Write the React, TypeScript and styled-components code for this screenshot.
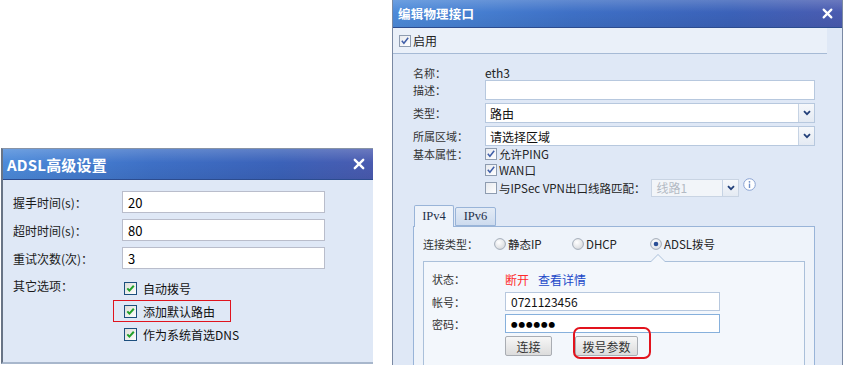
import React from "react";
import styled, { createGlobalStyle } from "styled-components";

const GlobalStyle = createGlobalStyle`
  html, body { margin: 0; padding: 0; background: #fff; }
  body { font-family: "Noto Sans CJK SC", "DejaVu Sans", sans-serif; }
`;

const Page = styled.div`
  display: flex;
  align-items: flex-start;
  width: 844px;
  height: 365px;
  overflow: hidden;
  background: #fff;
`;

/* ---------- shared bits ---------- */

const TitleBar = styled.div<{ $h: number; $pad: number }>`
  height: ${(p) => p.$h}px;
  flex: none;
  display: flex;
  align-items: center;
  justify-content: space-between;
  padding: 0 ${(p) => p.$pad + 4}px 0 ${(p) => p.$pad}px;
  background:
    linear-gradient(180deg, rgba(255,255,255,0.18) 0%, rgba(255,255,255,0) 45%, rgba(0,0,0,0.06) 100%),
    linear-gradient(90deg, #4d8bda 0%, #3e70c6 40%, #3b62b9 75%, #4a5bb0 100%);
  border-bottom: 1px solid #2c4c8f;
  color: #fff;
`;

const TitleText = styled.span<{ $size: number }>`
  font-size: ${(p) => p.$size}px;
  font-weight: bold;
  letter-spacing: 0.2px;
`;

const Close = ({ size }: { size: number }) => (
  <svg width={size} height={size} viewBox="0 0 10 10">
    <path d="M1.5 1.5 L8.5 8.5 M8.5 1.5 L1.5 8.5" stroke="#fff" strokeWidth="2" strokeLinecap="round" />
  </svg>
);

/* ---------- ADSL dialog ---------- */

const AdslDialog = styled.section`
  margin: 148px 0 0 1px;
  width: 372px;
  height: 216px;
  box-sizing: border-box;
  flex: none;
  display: flex;
  flex-direction: column;
  background: #dfe8f6;
  border-left: 2px solid #687486;
  border-top: 1px solid #8793a6;
  border-bottom: 2px solid #a8b7cc;
`;

const AdslBody = styled.div`
  padding: 11px 0 0 10px;
  display: grid;
  grid-template-columns: 109px 203px;
  row-gap: 6px;
  align-items: center;
  font-size: 12px;
  color: #1a1a1a;
`;

const AdslLabel = styled.span`
  white-space: nowrap;
`;

const AdslInput = styled.div`
  height: 22px;
  box-sizing: border-box;
  background: #fff;
  border: 1px solid #b9bdcb;
  padding-left: 5px;
  display: flex;
  align-items: center;
  font-size: 13px;
  color: #000;
`;

const OptionLabel = styled.span`
  align-self: start;
  margin-top: 2px;
  line-height: 17px;
`;

const OptionList = styled.div`
  align-self: start;
  margin-top: 2px;
  display: flex;
  flex-direction: column;
`;

const OptionRow = styled.div`
  position: relative;
  height: 23px;
  display: flex;
  align-items: center;
  gap: 6px;
  padding-left: 2px;
  font-size: 12px;
  color: #111;
`;

const Mark = styled.span`
  position: absolute;
  left: -9px;
  top: 0;
  width: 118px;
  height: 22px;
  box-sizing: border-box;
  border: 1px solid #e0141e;
`;

const XpCheck = () => (
  <svg width="13" height="13" viewBox="0 0 13 13">
    <defs>
      <linearGradient id="xpg" x1="0" y1="0" x2="1" y2="1">
        <stop offset="0" stopColor="#dcdcd6" />
        <stop offset="1" stopColor="#ffffff" />
      </linearGradient>
    </defs>
    <rect x="0.5" y="0.5" width="12" height="12" fill="url(#xpg)" stroke="#1c4f7e" />
    <path d="M3.3 6.3 L5.4 8.6 L9.8 3.8" fill="none" stroke="#21a12a" strokeWidth="2" />
  </svg>
);

/* ---------- interface dialog ---------- */

const IfaceDialog = styled.section`
  margin-left: 19px;
  width: 451px;
  height: 365px;
  flex: none;
  box-sizing: border-box;
  display: flex;
  flex-direction: column;
  background: #dfe8f6;
  border-left: 1px solid #7a89a3;
  border-right: 1px solid #7a89a3;
  font-size: 11px;
  color: #333;
`;

const EnableBar = styled.div`
  height: 25px;
  margin-right: 15px;
  flex: none;
  display: flex;
  align-items: center;
  gap: 2px;
  padding-left: 6px;
  background: #eaf0f9;
  border-bottom: 1px solid #a6bad5;
  font-size: 12px;
  color: #222;
`;

const Form = styled.div`
  display: flex;
  flex-direction: column;
  padding: 10px 0 0 20px;
`;

const Field = styled.div<{ $h: number; $mt?: number; $lw?: number }>`
  display: grid;
  grid-template-columns: ${(p) => p.$lw ?? 72}px 1fr;
  align-items: center;
  height: ${(p) => p.$h}px;
  margin-top: ${(p) => p.$mt ?? 0}px;
`;

const Label = styled.span`
  white-space: nowrap;
  color: #333;
`;

const TextBox = styled.div<{ $w: number; $h?: number; $focus?: boolean }>`
  width: ${(p) => p.$w}px;
  height: ${(p) => p.$h ?? 20}px;
  box-sizing: border-box;
  background: #fff;
  border: 1px solid ${(p) => (p.$focus ? "#86b0dc" : "#b7c8de")};
  padding-left: 5px;
  display: flex;
  align-items: center;
  font-size: 12px;
  color: #111;
`;

const Select = styled.div<{ $w: number; $h?: number; $off?: boolean }>`
  width: ${(p) => p.$w}px;
  height: ${(p) => p.$h ?? 20}px;
  box-sizing: border-box;
  display: flex;
  background: ${(p) => (p.$off ? "#f2f5f9" : "#fff")};
  border: 1px solid ${(p) => (p.$off ? "#c9d4e3" : "#b7c8de")};
  font-size: 12px;
  color: ${(p) => (p.$off ? "#b3bac4" : "#111")};
`;

const SelectText = styled.span`
  flex: 1;
  display: flex;
  align-items: center;
  padding-left: 4px;
`;

const SelectBtn = styled.span`
  width: 15px;
  flex: none;
  display: flex;
  align-items: center;
  justify-content: center;
  border-left: 1px solid #c6d3e4;
  background: linear-gradient(180deg, #f6f8fb, #e4eaf3);
`;

const Chevron = () => (
  <svg width="8" height="6" viewBox="0 0 8 6">
    <path d="M1 1.2 L4 4.2 L7 1.2" fill="none" stroke="#23407a" strokeWidth="1.8" />
  </svg>
);

const CheckLine = styled.div<{ $h: number }>`
  height: ${(p) => p.$h}px;
  display: flex;
  align-items: center;
  gap: 2px;
  white-space: nowrap;
  color: #222;
  font-size: 11.5px;
`;

const AttrList = styled.div`
  display: flex;
  flex-direction: column;
`;

const SmallCheck = ({ checked }: { checked?: boolean }) => (
  <svg width="12" height="12" viewBox="0 0 12 12">
    <defs>
      <linearGradient id="scg" x1="0" y1="0" x2="1" y2="1">
        <stop offset="0" stopColor="#e6e9ee" />
        <stop offset="1" stopColor="#ffffff" />
      </linearGradient>
    </defs>
    <rect x="0.5" y="0.5" width="11" height="11" fill="url(#scg)" stroke="#8e9cb0" />
    {checked && <path d="M2.8 5.8 L4.9 8.3 L9.2 2.8" fill="none" stroke="#3f5ea8" strokeWidth="1.5" />}
  </svg>
);

const Info = () => (
  <svg width="13" height="13" viewBox="0 0 13 13">
    <circle cx="6.5" cy="6.5" r="5.8" fill="#fff" stroke="#8aa3d2" />
    <circle cx="6.5" cy="3.8" r="0.9" fill="#6f8fc8" />
    <path d="M6.5 5.6 V10" stroke="#6f8fc8" strokeWidth="1.4" />
  </svg>
);

const Tabs = styled.div`
  display: flex;
  align-items: flex-end;
  margin: 8px 0 0 21px;
  height: 21px;
  gap: 1px;
  position: relative;
  z-index: 1;
`;

const Tab = styled.div<{ $active?: boolean }>`
  width: ${(p) => (p.$active ? 40 : 41)}px;
  height: ${(p) => (p.$active ? 22 : 19)}px;
  box-sizing: border-box;
  display: flex;
  align-items: center;
  justify-content: center;
  margin-bottom: ${(p) => (p.$active ? -1 : 0)}px;
  border: 1px solid #99b4d8;
  border-bottom: ${(p) => (p.$active ? "none" : "1px solid #99b4d8")};
  border-radius: 2px 2px 0 0;
  background: ${(p) => (p.$active ? "#eef3fa" : "linear-gradient(180deg, #e3ebf6, #cddbee)")};
  font-family: "Liberation Serif", "Noto Sans CJK SC", serif;
  font-size: 12.5px;
  color: #1f2f4a;
`;

const TabPanel = styled.div`
  margin-left: 20px;
  width: 402px;
  flex: 1;
  box-sizing: border-box;
  border: 1px solid #99b4d8;
  border-bottom: none;
  background: #eef3fa;
  padding: 8px 9px 0 9px;
  display: flex;
  flex-direction: column;
`;

const RadioGroup = styled.div`
  display: flex;
`;

const RadioItem = styled.label`
  width: 78px;
  display: flex;
  align-items: center;
  gap: 2px;
  color: #222;
  font-size: 11.5px;
  white-space: nowrap;
`;

const Radio = ({ on }: { on?: boolean }) => (
  <svg width="12" height="12" viewBox="0 0 12 12">
    <defs>
      <radialGradient id={on ? "rgOn" : "rgOff"} cx="0.4" cy="0.35" r="0.7">
        <stop offset="0" stopColor="#ffffff" />
        <stop offset="1" stopColor={on ? "#d9dde4" : "#d6d8dc"} />
      </radialGradient>
    </defs>
    <circle cx="6" cy="6" r="5.4" fill={`url(#${on ? "rgOn" : "rgOff"})`} stroke="#a3acb8" />
    {on && <circle cx="6" cy="6" r="2.3" fill="#2b4f96" />}
  </svg>
);

const InnerBox = styled.div`
  position: relative;
  margin-top: 8px;
  flex: 1;
  border: 1px solid #aac0da;
  border-bottom: none;
  background: #f3f7fc;
  padding: 8px 0 0 8px;
  display: flex;
  flex-direction: column;

  &::before,
  &::after {
    content: "";
    position: absolute;
    left: 226px;
    width: 0;
    height: 0;
    border-left: 8px solid transparent;
    border-right: 8px solid transparent;
  }
  &::before {
    top: -8px;
    border-bottom: 8px solid #aac0da;
  }
  &::after {
    top: -7px;
    border-bottom: 8px solid #f3f7fc;
  }
`;

const StatusText = styled.span<{ $tone: "red" | "blue" }>`
  color: ${(p) => (p.$tone === "red" ? "#ff2b2b" : "#2148c8")};
  font-size: 12px;
  margin-right: 9px;
`;

const Dots = styled.span`
  font-size: 6.5px;
  letter-spacing: 1px;
  color: #000;
`;

const Buttons = styled.div`
  display: flex;
  gap: 23px;
`;

const Anchor = styled.span`
  position: relative;
  display: inline-flex;
`;

const Button = styled.button<{ $w: number }>`
  width: ${(p) => p.$w}px;
  height: 20px;
  padding: 0;
  font-family: inherit;
  font-size: 12px;
  color: #333;
  background: linear-gradient(180deg, #f7f7f7 0%, #e9e9e9 50%, #dcdcdc 100%);
  border: 1px solid #a9adb3;
  border-radius: 2px;
`;

const RedRing = styled.span`
  position: absolute;
  left: -2px;
  top: -9px;
  width: 78px;
  height: 32px;
  box-sizing: border-box;
  border: 2px solid #e2131d;
  border-radius: 7px;
  pointer-events: none;
`;

const adslRows = [
  { label: "握手时间(s)：", value: "20" },
  { label: "超时时间(s)：", value: "80" },
  { label: "重试次数(次)：", value: "3" },
];

const adslOptions = [
  { text: "自动拨号", marked: false },
  { text: "添加默认路由", marked: true },
  { text: "作为系统首选DNS", marked: false },
];

export default function App() {
  return (
    <Page>
      <GlobalStyle />
      <AdslDialog>
        <TitleBar $h={30} $pad={4}>
          <TitleText $size={15}>ADSL高级设置</TitleText>
          <Close size={12} />
        </TitleBar>
        <AdslBody>
          {adslRows.map((r) => (
            <React.Fragment key={r.label}>
              <AdslLabel>{r.label}</AdslLabel>
              <AdslInput>{r.value}</AdslInput>
            </React.Fragment>
          ))}
          <OptionLabel>其它选项：</OptionLabel>
          <OptionList>
            {adslOptions.map((o) => (
              <OptionRow key={o.text}>
                {o.marked && <Mark />}
                <XpCheck />
                <span>{o.text}</span>
              </OptionRow>
            ))}
          </OptionList>
        </AdslBody>
      </AdslDialog>

      <IfaceDialog>
        <TitleBar $h={27} $pad={5}>
          <TitleText $size={12.5}>编辑物理接口</TitleText>
          <Close size={11} />
        </TitleBar>
        <EnableBar>
          <SmallCheck checked />
          <span>启用</span>
        </EnableBar>

        <Form>
          <Field $h={13}>
            <Label>名称：</Label>
            <span style={{ fontSize: 12, color: "#222" }}>eth3</span>
          </Field>
          <Field $h={20} $mt={3}>
            <Label>描述：</Label>
            <TextBox $w={330} />
          </Field>
          <Field $h={20} $mt={3}>
            <Label>类型：</Label>
            <Select $w={330}>
              <SelectText>路由</SelectText>
              <SelectBtn><Chevron /></SelectBtn>
            </Select>
          </Field>
          <Field $h={20} $mt={3}>
            <Label>所属区域：</Label>
            <Select $w={330}>
              <SelectText>请选择区域</SelectText>
              <SelectBtn><Chevron /></SelectBtn>
            </Select>
          </Field>
          <Field $h={51} style={{ alignItems: "start" }}>
            <Label style={{ lineHeight: "16px" }}>基本属性：</Label>
            <AttrList>
              <CheckLine $h={16}><SmallCheck checked />允许PING</CheckLine>
              <CheckLine $h={16}><SmallCheck checked />WAN口</CheckLine>
              <CheckLine $h={19}>
                <SmallCheck />
                与IPSec VPN出口线路匹配：
                <Select $w={88} $h={18} $off style={{ marginLeft: 4 }}>
                  <SelectText>线路1</SelectText>
                  <SelectBtn><Chevron /></SelectBtn>
                </Select>
                <span style={{ alignSelf: "flex-start", marginLeft: 2 }}><Info /></span>
              </CheckLine>
            </AttrList>
          </Field>
        </Form>

        <Tabs>
          <Tab $active>IPv4</Tab>
          <Tab>IPv6</Tab>
        </Tabs>
        <TabPanel>
          <Field $h={18} $lw={71}>
            <Label>连接类型：</Label>
            <RadioGroup>
              <RadioItem><Radio />静态IP</RadioItem>
              <RadioItem><Radio />DHCP</RadioItem>
              <RadioItem><Radio on />ADSL拨号</RadioItem>
            </RadioGroup>
          </Field>
          <InnerBox>
            <Field $h={18} $lw={73}>
              <Label>状态：</Label>
              <span>
                <StatusText $tone="red">断开</StatusText>
                <StatusText $tone="blue">查看详情</StatusText>
              </span>
            </Field>
            <Field $h={19} $mt={4} $lw={73}>
              <Label>帐号：</Label>
              <TextBox $w={215} $h={19}>0721123456</TextBox>
            </Field>
            <Field $h={19} $mt={3} $lw={73}>
              <Label>密码：</Label>
              <TextBox $w={215} $h={19} $focus>
                <Dots>●●●●●●</Dots>
              </TextBox>
            </Field>
            <Field $h={20} $mt={3} $lw={73}>
              <span />
              <Buttons>
                <Button $w={47}>连接</Button>
                <Anchor>
                  <Button $w={63}>拨号参数</Button>
                  <RedRing />
                </Anchor>
              </Buttons>
            </Field>
          </InnerBox>
        </TabPanel>
      </IfaceDialog>
    </Page>
  );
}
